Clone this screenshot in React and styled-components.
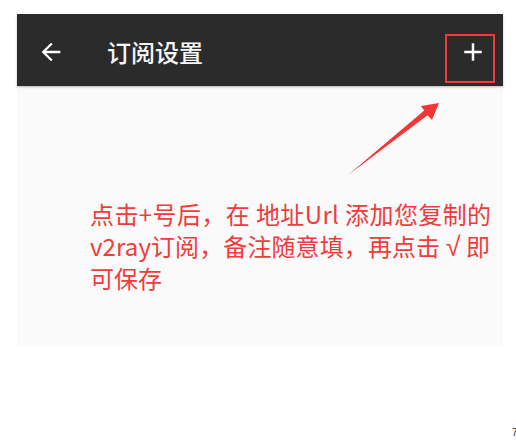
import React from 'react';
import styled, { createGlobalStyle } from 'styled-components';

const Global = createGlobalStyle`
  html, body { margin: 0; padding: 0; background: #ffffff; }
  body { font-family: "Noto Sans CJK SC", "Noto Sans", sans-serif; }
`;

const Page = styled.div`
  position: relative;
  width: 516px;
  height: 440px;
  overflow: hidden;
  box-sizing: border-box;
  padding: 14px 13px 0 17px;
`;

const Screen = styled.div`
  width: 486px;
  display: flex;
  flex-direction: column;
`;

const Toolbar = styled.header`
  position: relative;
  z-index: 1;
  height: 72px;
  box-sizing: border-box;
  padding: 4px 6px 0 10px;
  background: #2b2b2b;
  display: flex;
  align-items: center;
  box-shadow: 0 1px 2px rgba(0, 0, 0, 0.28);
`;

const IconButton = styled.button`
  width: 48px;
  height: 48px;
  flex: none;
  border: 0;
  padding: 0;
  background: none;
  color: #ffffff;
  display: flex;
  align-items: center;
  justify-content: center;
`;

const Title = styled.h1`
  flex: 1;
  margin: 0 0 0 32px;
  font-size: 24px;
  font-weight: 500;
  line-height: 1;
  color: #f7f7f7;
`;

const Content = styled.main`
  height: 260px;
  box-sizing: border-box;
  background: #fafafa;
  padding: 112px 0 0 73px;
`;

const Note = styled.p`
  margin: 0;
  color: #f23b3b;
  font-size: 24px;
  line-height: 32px;
  letter-spacing: ${(p) => p.$spacing || 0}px;
  white-space: nowrap;
`;

const Check = styled.span`
  font-family: "Liberation Sans", "DejaVu Sans", sans-serif;
  font-size: 27px;
  line-height: 1;
`;

const Highlight = styled.div`
  position: absolute;
  left: 445px;
  top: 34px;
  width: 50px;
  height: 49px;
  box-sizing: border-box;
  border: 2px solid #f03a3a;
  pointer-events: none;
  z-index: 2;
`;

const Pointer = styled.svg`
  position: absolute;
  left: 0;
  top: 0;
  pointer-events: none;
  z-index: 2;
`;

const CornerGlyph = styled.span`
  position: absolute;
  left: 512px;
  top: 428px;
  font-family: "Liberation Sans", sans-serif;
  font-size: 10px;
  line-height: 1;
  color: #222222;
`;

const BackIcon = () => (
  <svg width="28" height="28" viewBox="0 0 24 24" fill="currentColor">
    <path d="M20 11H7.83l5.59-5.59L12 4l-8 8 8 8 1.41-1.41L7.83 13H20v-2z" />
  </svg>
);

const AddIcon = () => (
  <svg width="30" height="30" viewBox="0 0 24 24" fill="currentColor">
    <path d="M19 13h-6v6h-2v-6H5v-2h6V5h2v6h6v2z" />
  </svg>
);

export default function App() {
  return (
    <>
      <Global />
      <Page>
        <Screen>
          <Toolbar>
            <IconButton aria-label="返回"><BackIcon /></IconButton>
            <Title>订阅设置</Title>
            <IconButton aria-label="添加"><AddIcon /></IconButton>
          </Toolbar>
          <Content>
            <Note $spacing={0.4}>点击+号后，在 地址Url 添加您复制的</Note>
            <Note $spacing={0.1}>v2ray订阅，备注随意填，再点击 <Check>√</Check> 即</Note>
            <Note>可保存</Note>
          </Content>
        </Screen>
        <Highlight />
        <Pointer width="516" height="440" viewBox="0 0 516 440">
          <polygon
            points="348,175 424.2,110.6 421,106 439,103 432,120 427.6,115.3"
            fill="#f23636"
          />
        </Pointer>
        <CornerGlyph>7</CornerGlyph>
      </Page>
    </>
  );
}
